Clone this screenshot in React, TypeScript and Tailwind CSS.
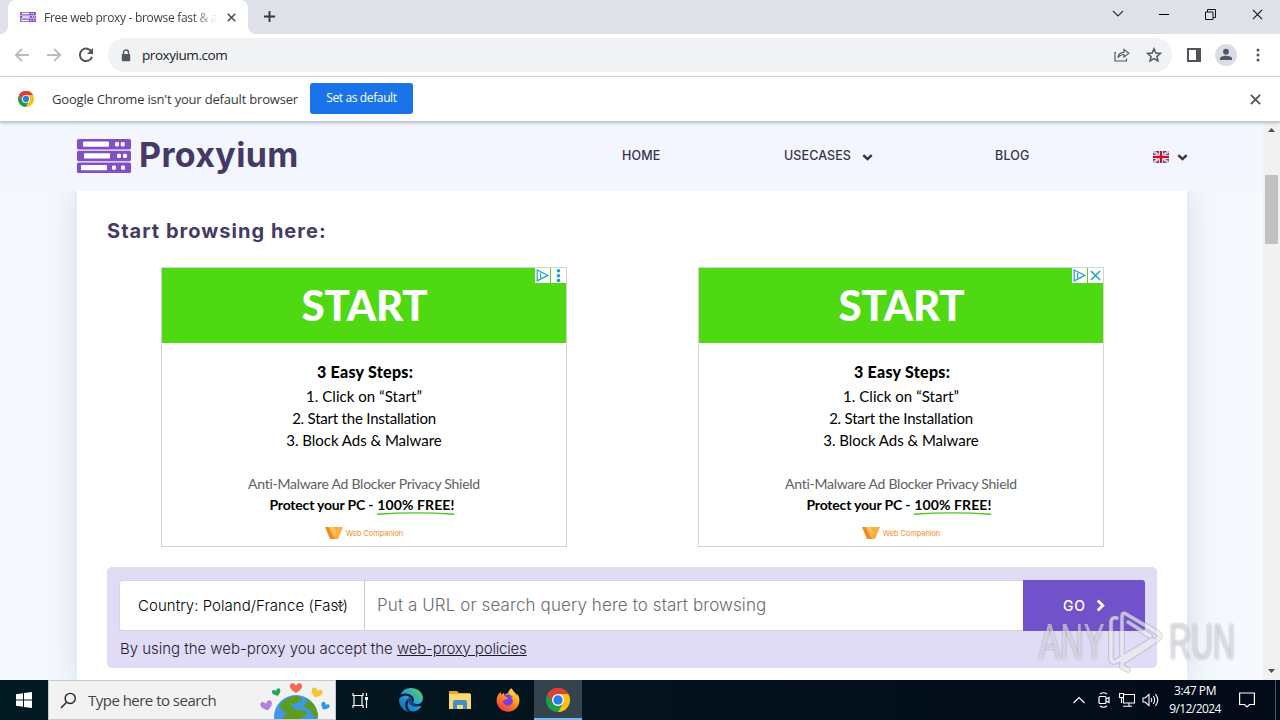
import React from 'react';
import { FaEdge, FaFirefoxBrowser } from 'react-icons/fa6';

function ChromeLogo({ className }: { className: string }) {
  return (
    <svg viewBox="0 0 48 48" className={className}>
      <path d="M24 24L3.2 12A24 24 0 0 1 44.8 12Z" fill="#ea4335" />
      <path d="M3.2 12L13.6 30L34.4 30L24 48A24 24 0 0 1 3.2 12Z" fill="#1e9e4a" />
      <path d="M24 48L34.4 30L24 12H44.8A24 24 0 0 1 24 48Z" fill="#fbc116" />
      <path d="M3.2 12L13.6 30L24 24V12H44.8A24 24 0 0 0 3.2 12Z" fill="#df4033" />
      <circle cx="24" cy="24" r="12" fill="#fff" />
      <circle cx="24" cy="24" r="9.4" fill="#2b7de9" />
    </svg>
  );
}

function ServerLogo({ className }: { className: string }) {
  return (
    <svg viewBox="0 0 54 34" className={className} preserveAspectRatio="none">
      <rect width="54" height="10.4" rx="1.6" fill="#8350c4" />
      <rect y="11.8" width="54" height="10.4" rx="1.6" fill="#8350c4" />
      <rect y="23.6" width="54" height="10.4" rx="1.6" fill="#8350c4" />
      <g fill="#fff">
        <rect x="6" y="2.6" width="26" height="5.2" rx="0.8" />
        <rect x="38" y="3" width="4" height="4.4" rx="1.4" />
        <rect x="43.8" y="3" width="4" height="4.4" rx="1.4" />
        <rect x="7" y="14.3" width="26" height="5.2" rx="0.8" />
        <rect x="40" y="14.8" width="4" height="4.2" rx="1.4" />
        <rect x="46" y="14.8" width="4" height="4.2" rx="1.4" />
        <rect x="4" y="26" width="26" height="5.2" rx="0.8" />
        <rect x="35" y="26.6" width="4" height="4.2" rx="1.4" />
        <rect x="44" y="26.6" width="4" height="4.2" rx="1.4" />
      </g>
    </svg>
  );
}

function Cross({ className, width = 2 }: { className: string; width?: number }) {
  return (
    <svg viewBox="0 0 12 12" className={className} fill="none" stroke="currentColor" strokeWidth={width}>
      <path d="M1 1L11 11M11 1L1 11" />
    </svg>
  );
}

function Chevron({ className }: { className: string }) {
  return (
    <svg viewBox="0 0 12 8" className={className} fill="none" stroke="currentColor" strokeWidth="2.9">
      <path d="M1.2 1.3L6 5.8L10.8 1.3" />
    </svg>
  );
}

function TabStrip() {
  return (
    <div className="flex h-[34px] shrink-0 bg-[#dee1e8] pl-2">
      <div className="relative flex h-full w-[240px] items-center rounded-t-[8px] bg-white pl-3">
        <svg className="absolute bottom-0 -left-2 size-2" viewBox="0 0 8 8"><path d="M8 0V8H0A8 8 0 0 0 8 0Z" fill="#fff" /></svg>
        <svg className="absolute -right-2 bottom-0 size-2" viewBox="0 0 8 8"><path d="M0 0V8H8A8 8 0 0 1 0 0Z" fill="#fff" /></svg>
        <ServerLogo className="h-[10px] w-4" />
        <div className="ml-2 w-[176px] pt-px font-['Open_Sans',sans-serif] text-[12px] leading-4 tracking-[-0.3px] whitespace-nowrap text-[#3c4043] [mask-image:linear-gradient(to_right,#000_148px,transparent_174px)]">
          Free web proxy - browse fast &amp; a
        </div>
        <Cross className="ml-[7px] size-[9px] text-[#45494d]" />
      </div>
      <svg viewBox="0 0 14 14" className="mt-[10px] ml-[15px] size-[13px]" stroke="#33373b" strokeWidth="2"><path d="M7 1V13M1 7H13" /></svg>
      <div className="ml-auto flex items-center pr-[17px] pb-[6px] text-[#111]">
        <svg viewBox="0 0 12 8" className="mr-[35px] h-[8px] w-3" fill="none" stroke="#333" strokeWidth="1.2"><path d="M1 1L6 6L11 1" /></svg>
        <div className="mr-[36px] h-px w-[10px] bg-black" />
        <svg viewBox="0 0 11 11" className="mr-[36px] size-[11px]" fill="none" stroke="#111"><path d="M0.5 3H8V10.5H0.5ZM2.5 3V0.5H10.5V8.5H8" /></svg>
        <Cross className="size-[11px]" width={1.2} />
      </div>
    </div>
  );
}

function Toolbar() {
  return (
    <div className="flex h-[43px] shrink-0 items-center border-b border-[#d8dade] bg-white pl-[14px]">
      <svg viewBox="0 0 16 16" className="size-4" fill="none" stroke="#b9bbbe" strokeWidth="1.8"><path d="M15 8H2M8 1.8L1.8 8L8 14.2" /></svg>
      <svg viewBox="0 0 16 16" className="ml-4 size-4" fill="none" stroke="#b9bbbe" strokeWidth="1.8"><path d="M1 8H14M8 1.8L14.2 8L8 14.2" /></svg>
      <svg viewBox="0 0 16 16" className="ml-4 size-4" fill="none" stroke="#505458" strokeWidth="2"><path d="M13.6 5A6.2 6.2 0 1 0 14 9.7" /><path d="M15 1V7H9Z" fill="#505458" stroke="none" /></svg>
      <div className="ml-[14px] flex h-[34px] w-[1064px] items-center rounded-full bg-[#f0f2f4] pl-[13px]">
        <svg viewBox="0 0 10 13" className="h-[13px] w-[10px]"><path d="M2.5 6V3.5A2.5 2.5 0 0 1 7.5 3.5V6" fill="none" stroke="#54585c" strokeWidth="1.4" /><rect x="0.8" y="5" width="8.4" height="7.2" rx="0.8" fill="#54585c" /></svg>
        <span className="ml-[11px] font-['Open_Sans',sans-serif] text-[13.5px] leading-5 tracking-[-0.44px] text-[#202124]">proxyium.com</span>
        <svg viewBox="0 0 16 14" className="ml-auto h-[14px] w-4" fill="none" stroke="#54585c" strokeWidth="1.2"><path d="M2 4.5H1V13H12.5V10.5M4 9.8C4.2 6 6.5 4.3 10 4.3V1.4L14.8 5.3L10 9.1V6.5C7 6.5 5.5 7.3 4 9.8Z" /></svg>
        <svg viewBox="0 0 16 16" className="mr-[10px] ml-4 size-4" fill="none" stroke="#54585c" strokeWidth="1.5"><path d="M8 1.8L9.8 6L14.4 6.4L10.9 9.5L12 14L8 11.6L4 14L5.1 9.5L1.6 6.4L6.2 6Z" /></svg>
      </div>
      <svg viewBox="0 0 14 14" className="ml-[15px] size-[14px]"><path d="M0 0H14V14H0ZM2 2V12H9V2Z" fill="#505458" fillRule="evenodd" /></svg>
      <svg viewBox="0 0 22 22" className="ml-[14px] size-[22px]"><circle cx="11" cy="11" r="11" fill="#dbdde5" /><circle cx="11" cy="7.7" r="2.9" fill="#50566a" /><path d="M5 16V14.6C5 12.8 8.4 11.8 11 11.8S17 12.8 17 14.6V16Z" fill="#50566a" /></svg>
      <svg viewBox="0 0 4 14" className="ml-[19px] h-[14px] w-1" fill="#505458"><circle cx="2" cy="2" r="1.5" /><circle cx="2" cy="7" r="1.5" /><circle cx="2" cy="12" r="1.5" /></svg>
    </div>
  );
}

function InfoBar() {
  return (
    <div className="relative z-10 flex h-[45px] shrink-0 items-center border-b border-[#c3c9d2] bg-white pl-[18px] shadow-[0_1px_3px_rgba(80,100,120,0.4)]">
      <ChromeLogo className="size-4" />
      <span className="ml-[18px] w-[258px] pt-px font-['Open_Sans',sans-serif] text-[13px] tracking-[-0.19px] whitespace-nowrap text-[#34373b]">Google Chrome isn't your default browser</span>
      <button className="mb-px h-[31px] w-[103px] rounded-[3px] bg-[#1a73e8] pb-px font-['Open_Sans',sans-serif] text-[12px] tracking-[-0.38px] whitespace-nowrap text-white">Set as default</button>
      <Cross className="mr-[19px] ml-auto size-[11px] text-[#505458]" />
    </div>
  );
}

function Flag() {
  return (
    <svg viewBox="0 0 16 12" className="mt-px h-3 w-4">
      <rect width="16" height="12" rx="1.5" fill="#4d4e8c" />
      <path d="M0 0L16 12M16 0L0 12" stroke="#f5e6ee" strokeWidth="2.4" />
      <path d="M0 0L16 12M16 0L0 12" stroke="#e38e9c" strokeWidth="0.9" />
      <path d="M8 0V12M0 6H16" stroke="#fff" strokeWidth="4" />
      <path d="M8 0V12M0 6H16" stroke="#c8102e" strokeWidth="2.4" />
    </svg>
  );
}

function Header() {
  return (
    <header className="relative z-[5] flex h-[69px] shrink-0 items-center bg-[#f3f6fe] pl-[77px] font-['Inter',sans-serif] text-[12.5px] font-medium text-[#37334c]">
      <ServerLogo className="mb-[2px] h-[34px] w-[54px]" />
      <div className="ml-[8px] w-[483px] pb-[3px] font-['Inter',sans-serif] text-[34px] leading-[40px] font-bold tracking-[0.35px] text-[#443a65]">Proxyium</div>
      <div className="w-[162px] tracking-[0.15px]">HOME</div>
      <div className="flex w-[211px] items-center tracking-[0.1px]"><span className="w-[78px]">USECASES</span><Chevron className="mt-px h-[7px] w-[11px]" /></div>
      <div className="w-[158px] tracking-[0.2px]">BLOG</div>
      <Flag />
      <Chevron className="mt-px ml-[8px] h-[7px] w-[11px]" />
    </header>
  );
}

function Ad({ control }: { control: 'dots' | 'cross' }) {
  return (
    <section className="relative flex h-[280px] w-[406px] flex-col items-center border border-[#d4d4d4] bg-white font-['Lato',sans-serif] whitespace-nowrap text-black">
      <div className="flex h-[75px] w-full items-center justify-center bg-[#4fd913] pb-[2px] pl-px text-[42px] leading-none font-black text-white"><span className="tracking-[-0.2px]">START</span></div>
      <div className="mt-[18px] h-[22px] pl-[2px] text-[16px] leading-[22px] font-black tracking-[0.27px]">3 Easy Steps:</div>
      <div className="mt-[3px] text-center text-[15px] leading-[21.9px]">
        <div className="tracking-[0.05px]">1. Click on “Start”</div>
        <div className="tracking-[-0.21px]">2. Start the Installation</div>
        <div className="tracking-[-0.03px]">3. Block Ads &amp; Malware</div>
      </div>
      <div className="mt-[21px] text-[14px] leading-[22px] tracking-[-0.27px] text-[#606060]">Anti-Malware Ad Blocker Privacy Shield</div>
      <div className="flex pr-[4px] text-[14px] leading-[20px] font-bold">
        <span className="mr-1 tracking-[-0.19px]">Protect your PC -</span>
        <span className="relative tracking-[0.1px]">100% FREE!
          <svg className="absolute bottom-0 left-0 h-[3px] w-full" viewBox="0 0 78 3" preserveAspectRatio="none" fill="none" stroke="#4fc51c" strokeWidth="1.4"><path d="M0 2.2Q39 -0.4 78 2.2" /></svg>
        </span>
      </div>
      <div className="mt-[12px] flex items-center gap-[3px] text-[7.5px] leading-[13px] text-[#f48b2a]">
        <svg viewBox="0 0 18 13" className="h-[13px] w-[18px]"><path d="M0 0H9L12 12H5Z" fill="#f58a1f" /><path d="M9 0H18L13 12H10L7 5Z" fill="#fbb03b" /><path d="M4 0H9L11 6L9 10Z" fill="#ffc55c" /></svg>
        <span className="font-['Inter',sans-serif] tracking-[-0.1px]">Web Companion</span>
      </div>
      <div className="absolute top-0 right-0 flex h-[15px] gap-px">
        <svg viewBox="0 0 15 15" className="size-[15px] bg-white" fill="none" stroke="#22a0c6" strokeWidth="1.2"><path d="M2.2 1.9V12.9L12.8 7.4ZM5.6 5V10" /></svg>
        {control === 'dots' ? (
          <svg viewBox="0 0 15 15" className="size-[15px] bg-white" fill="#159fd1"><circle cx="7.5" cy="2.8" r="1.8" /><circle cx="7.5" cy="7.7" r="1.8" /><circle cx="7.5" cy="12.6" r="1.8" /></svg>
        ) : (
          <svg viewBox="0 0 15 15" className="size-[15px] bg-white" stroke="#22a0c6" strokeWidth="1.5"><path d="M3 3L12 12M12 3L3 12" /></svg>
        )}
      </div>
    </section>
  );
}

function ProxyForm() {
  return (
    <div className="mt-[20px] h-[101px] rounded-[5px] bg-[#e1dcf5] pt-[13px] pl-[12px] font-['Inter',sans-serif] text-[#1d1b31]">
      <div className="flex h-[51px] w-[1026px]">
        <div className="flex w-[246px] items-center rounded-l-[3px] border border-[#d5d3dd] border-r-[#c8c6d2] bg-white pl-[18px] text-[15px] font-light">
          <span className="pt-px tracking-[0.04px] whitespace-nowrap text-black">Country: Poland/France (Fast)</span>
          <svg viewBox="0 0 10 6" className="-ml-[13px] h-[6px] w-[10px] shrink-0" fill="none" stroke="#666" strokeWidth="1.2"><path d="M1 0.5L5 4.5L9 0.5" /></svg>
        </div>
        <div className="flex flex-1 items-center border-y border-[#d5d3dd] bg-white pl-[12px] text-[17px] font-light text-[#6c6c70]">
          <span className="tracking-[0.1px] whitespace-nowrap">Put a URL or search query here to start browsing</span>
        </div>
        <button className="flex w-[122px] items-center rounded-r-[3px] bg-[#7152ca] pl-[40px] text-[14px] font-medium text-white">
          <span className="w-[33px] text-left tracking-[0.7px]">GO</span>
          <svg viewBox="0 0 9 14" className="h-[13px] w-[9px]" fill="none" stroke="#fff" strokeWidth="3"><path d="M1.5 1.5L7 7L1.5 12.5" /></svg>
        </button>
      </div>
      <div className="mt-[7px] pl-px text-[15px] leading-[22px] font-light whitespace-nowrap"><span className="tracking-[-0.03px]">By using the web-proxy you accept the </span><a className="tracking-[-0.18px] underline">web-proxy policies</a></div>
    </div>
  );
}

function Watermark() {
  const mark = 'M20 60L14 57L14 52L40 36M14 45V6Q14 2 18 4L50 23Q54 26 50 29L18 50M20 12L42 26M9 8Q3 7 3 12V48Q3 54 9 51L44 30';
  return (
    <div className="absolute top-[610px] left-[1039px] z-20 flex h-[63px] w-[196px] items-center justify-between font-['Liberation_Sans_Narrow','Liberation_Sans',sans-serif] text-[50px] leading-none text-white/50 [text-shadow:0_0_3px_rgba(90,90,110,0.55)]">
      <div className="w-[64px]"><div className="origin-left scale-x-[0.64]">ANY</div></div>
      <svg viewBox="0 0 56 63" className="h-[63px] w-14" fill="none" strokeLinejoin="round" strokeLinecap="round">
        <path d={mark} stroke="#777789" strokeOpacity="0.25" strokeWidth="6" />
        <path d={mark} stroke="#fff" strokeOpacity="0.6" strokeWidth="3.5" />
      </svg>
      <div className="w-[66px]"><div className="origin-left scale-x-[0.61]">RUN</div></div>
    </div>
  );
}

function Earth() {
  const heart = 'M0 2C-2 -2 -6 0 -5 3C-4 6 0 8 0 8S4 6 5 3C6 0 2 -2 0 2Z';
  return (
    <svg viewBox="0 0 74 38" className="h-[38px] w-[74px]">
      <circle cx="38" cy="36" r="22" fill="#3f97e6" />
      <path d="M22 24Q29 15 40 15L45 18L37 23L32 22L36 28L47 30L50 33L42 38H24L29 32L23 28ZM46 16Q58 22 60 34L57 38L52 29L45 25L50 21Z" fill="#5f9c1c" />
      <path d={heart} transform="translate(38 2.5) scale(1.2)" fill="#f26a50" />
      <path d={heart} transform="translate(17.5 8.5) rotate(-20) scale(.85)" fill="#27a65c" />
      <path d={heart} transform="translate(60 8) rotate(20) scale(1.1)" fill="#f9c234" />
      <path d={heart} transform="translate(7.5 20.5) rotate(-15) scale(1.15)" fill="#b083db" />
      <path d={heart} transform="translate(68.5 22.5) rotate(30) scale(.85)" fill="#2c9bdd" />
    </svg>
  );
}

function Taskbar() {
  return (
    <footer className="flex h-10 shrink-0 items-center bg-[#021521] bg-gradient-to-r from-[#021a22] to-[#030a18] font-['Open_Sans',sans-serif] text-white">
      <svg viewBox="0 0 16 16" className="mx-4 size-4" fill="#fff"><path d="M0 2.3L7 1.3V7.5H0ZM8 1.1L16 0V7.5H8ZM0 8.5H7V14.7L0 13.7ZM8 8.5H16V16L8 14.9Z" /></svg>
      <div className="flex h-10 w-72 items-center border border-[#c8c8ca] bg-[#f2f2f2] pl-[11px]">
        <svg viewBox="0 0 18 18" className="size-[17px]" fill="none" stroke="#222" strokeWidth="1.4"><circle cx="10.8" cy="6.8" r="5.4" /><path d="M7 10.8L1 17" /></svg>
        <span className="ml-[11px] text-[15px] tracking-[-0.52px] whitespace-nowrap text-[#444]">Type here to search</span>
        <span className="mr-[3px] ml-auto"><Earth /></span>
      </div>
      <div className="flex w-12 justify-center">
        <svg viewBox="0 0 17 17" className="size-[17px]" fill="none" stroke="#fff" strokeWidth="1.2"><path d="M1 1V3.5H11V1M1 16V13.5H11V16M2 3.5V13.5M10 3.5V13.5M14.5 1V4M14.5 8V16" /><path d="M13 5H16V8H13Z" fill="#fff" stroke="none" /></svg>
      </div>
      <div className="flex w-[54px] justify-center">
        <svg viewBox="0 0 24 24" className="size-6">
          <defs><linearGradient id="edge" x1="0" y1="1" x2="1" y2="0"><stop stopColor="#0d5bb5" /><stop offset=".5" stopColor="#249fd9" /><stop offset="1" stopColor="#62d657" /></linearGradient></defs>
          <path d="M8 10L12 9L14 16L21 18Q17 24 10 23Z" fill="#114a99" />
          <FaEdge size={24} fill="url(#edge)" />
        </svg>
      </div>
      <div className="flex w-11 justify-center">
        <svg viewBox="0 0 22 20" className="h-5 w-[22px]"><path d="M0 1H8L10 3H21V19H0Z" fill="#e9a52e" /><path d="M0 4H22V19H0Z" fill="#fcd870" /><path d="M4 19V12Q4 10 6 10H16Q18 10 18 12V19H14V15H8V19Z" fill="#4190cc" /></svg>
      </div>
      <div className="flex w-[52px] justify-center">
        <svg viewBox="0 0 24 24" className="size-6">
          <defs><linearGradient id="fox" x1="0.8" y1="0" x2="0.2" y2="1"><stop stopColor="#fff044" /><stop offset=".5" stopColor="#ff8a16" /><stop offset="1" stopColor="#f52d59" /></linearGradient></defs>
          <circle cx="12" cy="12" r="7" fill="#7a3fe0" />
          <FaFirefoxBrowser size={24} fill="url(#fox)" />
        </svg>
      </div>
      <div className="flex h-10 w-12 items-center justify-center border-b-2 border-[#76b9ed] bg-[#34434c] pt-[2px]"><ChromeLogo className="size-6" /></div>
      <div className="ml-auto flex items-center pr-[25px]">
        <svg viewBox="0 0 12 8" className="mr-[13px] h-2 w-3" fill="none" stroke="#fff" strokeWidth="1.2"><path d="M0.5 7L6 1.5L11.5 7" /></svg>
        <svg viewBox="0 0 12 16" className="mr-[9px] h-4 w-3" fill="none" stroke="#fff" strokeWidth="1.2"><rect x="1" y="4.5" width="7" height="7" rx="1" /><path d="M8 7L11 5.5V10.5L8 9M2 2Q5.5 -0.5 9 2M2 14Q5.5 16.5 9 14" /></svg>
        <svg viewBox="0 0 16 14" className="mr-[7px] h-[14px] w-4" fill="none" stroke="#fff" strokeWidth="1.1"><path d="M5 1.5H15.5V10H4.5V5M0.5 0.5H4.5V4.5H0.5ZM2.5 4.5V10M10 10V13M4 13.2H13" /></svg>
        <svg viewBox="0 0 17 14" className="mr-[10px] h-[14px] w-[17px]" fill="none" stroke="#fff" strokeWidth="1.1"><path d="M1 5H3L7 1.5V12.5L3 9H1ZM9 5Q10.5 7 9 9M11.3 3Q14 7 11.3 11M13.5 1.2Q18 7 13.5 12.8" /></svg>
        <div className="w-[52px] text-center text-[12px] leading-[18px] whitespace-nowrap"><div className="tracking-[-0.4px]">3:47 PM</div><div className="-mx-2 tracking-[-0.6px]">9/12/2024</div></div>
        <svg viewBox="0 0 16 16" className="ml-[18px] size-4" fill="none" stroke="#fff" strokeWidth="1.2"><path d="M0.6 1H15.4V12.5H10.5L8 15L5.5 12.5H0.6Z" /></svg>
      </div>
      <div className="-ml-[5px] h-10 w-px bg-[#47505c]" />
      <div className="w-1" />
    </footer>
  );
}

export default function App() {
  return (
    <div className="relative flex h-[720px] w-[1280px] flex-col overflow-hidden bg-white">
      <TabStrip />
      <Toolbar />
      <InfoBar />
      <div className="flex h-[558px] shrink-0">
        <main className="flex w-[1263px] flex-col overflow-hidden bg-[#f5f9fd]">
          <Header />
          <div className="ml-[77px] h-[489px] w-[1110px] shrink-0 bg-white px-[30px] pt-[24px] shadow-[0_0_30px_rgba(70,80,150,0.2)]">
            <h1 className="h-[30px] pt-px font-['Inter',sans-serif] text-[20px] leading-[30px] font-bold tracking-[1.03px] text-[#443a65]">Start browsing here:</h1>
            <div className="mt-[22px] flex gap-[131px] pl-[54px]"><Ad control="dots" /><Ad control="cross" /></div>
            <ProxyForm />
          </div>
        </main>
        <div className="flex w-[17px] flex-col items-center bg-[#f1f1f1]">
          <svg viewBox="0 0 7 4" className="mt-[6px] h-1 w-[7px]"><path d="M0 4L3.5 0L7 4Z" fill="#505050" /></svg>
          <div className="mt-[43px] h-[69px] w-[13px] bg-[#c1c1c1]" />
          <svg viewBox="0 0 7 4" className="mt-auto mb-[7px] h-1 w-[7px]"><path d="M0 0L3.5 4L7 0Z" fill="#505050" /></svg>
        </div>
      </div>
      <Taskbar />
      <Watermark />
    </div>
  );
}
